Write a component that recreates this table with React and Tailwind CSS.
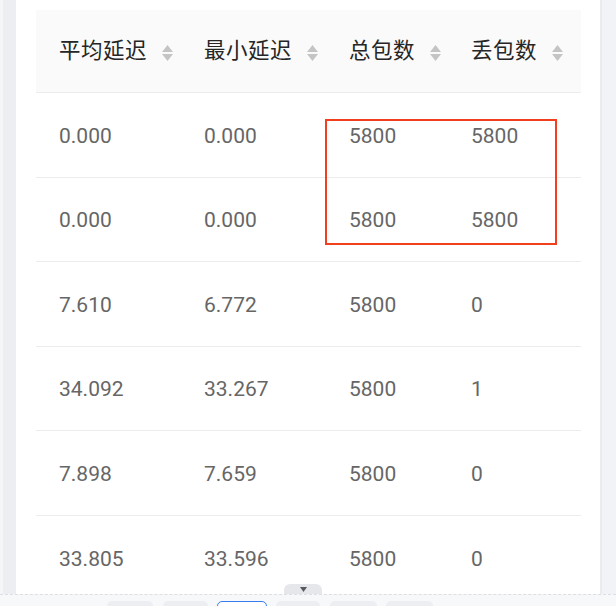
import React from 'react';

const columns = [
  { title: '平均延迟', width: 'w-[145px]' },
  { title: '最小延迟', width: 'w-[145px]' },
  { title: '总包数', width: 'w-[122px]' },
  { title: '丢包数', width: 'w-[133px]' },
];

const rows = [
  ['0.000', '0.000', '5800', '5800'],
  ['0.000', '0.000', '5800', '5800'],
  ['7.610', '6.772', '5800', '0'],
  ['34.092', '33.267', '5800', '1'],
  ['7.898', '7.659', '5800', '0'],
  ['33.805', '33.596', '5800', '0'],
];

const SortIcon = () => (
  <span className="flex flex-col items-center gap-[2px] ml-[15px] mt-[3px]">
    <svg width="11" height="7" viewBox="0 0 11 7">
      <path d="M5.5 0 L11 7 L0 7 Z" fill="#c4c4c4" />
    </svg>
    <svg width="11" height="7" viewBox="0 0 11 7">
      <path d="M0 0 L11 0 L5.5 7 Z" fill="#c4c4c4" />
    </svg>
  </span>
);

// bottom toolbar pills, only the tops peek into view
const pills = [
  { left: 'left-[107px]', w: 'w-[46px]' },
  { left: 'left-[163px]', w: 'w-[45px]' },
  { left: 'left-[276px]', w: 'w-[44px]' },
  { left: 'left-[330px]', w: 'w-[47px]' },
  { left: 'left-[386px]', w: 'w-[47px]' },
];

export default function App() {
  return (
    <div className="relative w-[616px] h-[606px] overflow-hidden flex bg-[#f2f3f6] font-['Roboto','Noto_Sans_CJK_SC',sans-serif]">
      {/* left gutter */}
      <div className="w-[16px] shrink-0 flex">
        <div className="w-[3px] bg-[#f5f6f8]" />
        <div className="flex-1 bg-[#eceef2]" />
      </div>

      {/* card */}
      <div className="w-[586px] shrink-0 bg-white border-r-2 border-[#eaebee] pt-[10px] pl-[20px]">
        <div className="w-[545px]">
          <div className="flex h-[83px] bg-[#fafafa] border-b border-[#ececec]">
            {columns.map((c) => (
              <div key={c.title} className={`${c.width} flex items-center pl-[23px]`}>
                <span className="text-[21.5px] font-normal text-[#262626] tracking-[0.5px]">{c.title}</span>
                <SortIcon />
              </div>
            ))}
          </div>

          {rows.map((r, i) => (
            <div key={i} className="flex h-[84.6px] border-b border-[#ececec] pt-[3px]">
              {r.map((v, j) => (
                <div key={j} className={`${columns[j].width} flex items-center pl-[23px] text-[21px] text-[#666666]`}>
                  {v}
                </div>
              ))}
            </div>
          ))}
        </div>
      </div>

      {/* annotation box */}
      <div className="absolute left-[325px] top-[119px] w-[232px] h-[126px] border-2 border-[#f2401f]" />

      {/* bottom drawer handle */}
      <div className="absolute left-[284px] top-[584px] w-[38px] h-[10px] bg-[#e6e7eb] rounded-t-[6px] flex items-center justify-center">
        <svg width="7" height="5" viewBox="0 0 7 5">
          <path d="M0 0 L7 0 L3.5 5 Z" fill="#555a63" />
        </svg>
      </div>

      {/* bottom toolbar */}
      <div className="absolute left-0 top-[594px] w-[616px] h-[12px] bg-[#f7f8fa] border-t border-dashed border-[#dcdee2]">
        {pills.map((p, i) => (
          <div key={i} className={`absolute ${p.left} ${p.w} top-[6px] h-[12px] rounded-[5px] bg-[#eceef1]`} />
        ))}
        <div className="absolute left-[217px] top-[6px] w-[50px] h-[12px] rounded-[5px] bg-white border-[1.5px] border-[#3b7cf0]" />
      </div>
    </div>
  );
}
